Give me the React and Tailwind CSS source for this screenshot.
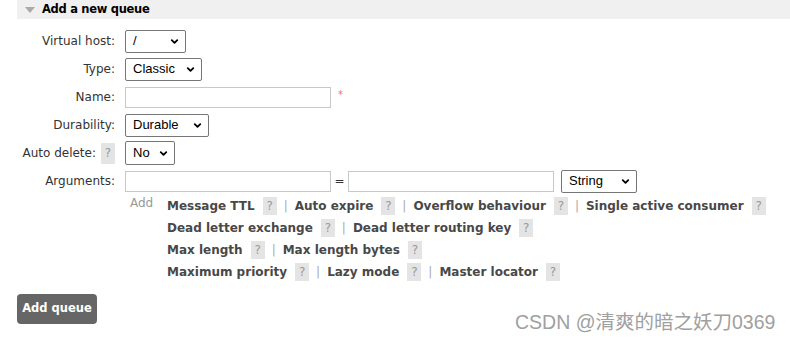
import { ChevronDown } from 'lucide-react'

const font = { fontFamily: '"DejaVu Sans", Verdana, sans-serif' }

function Select({ value, width, height = 'h-[23px]' }) {
  return (
    <div
      className={`${width} ${height} flex items-center justify-between border border-[#767676] rounded-[2px] bg-white pl-[7px] pr-[5px] text-[13px] text-black`}
      style={{ fontFamily: '"Liberation Sans", Arial, sans-serif' }}
    >
      <span>{value}</span>
      <ChevronDown className="w-[11px] h-[11px] text-black" strokeWidth={4} />
    </div>
  )
}

function Help({ className = 'h-[18px]' }) {
  return (
    <span className={`inline-flex items-center justify-center w-[14px] ${className} bg-[#e4e4e4] text-[#999] text-[12px] font-normal`}>
      ?
    </span>
  )
}

function Sep() {
  return <span className="mx-[7px] text-[#aaa] font-normal">|</span>
}

function Arg({ name }) {
  return (
    <>
      <span>{name}</span>
      <span className="ml-[8px]"><Help /></span>
    </>
  )
}

function Row({ label, children }) {
  return (
    <div className="flex items-center h-[28px]">
      <div className="w-[98px] flex items-center justify-end text-[12px] text-[#333]">{label}</div>
      <div className="ml-[10px] flex items-center">{children}</div>
    </div>
  )
}

const argRows = [
  ['Message TTL', 'Auto expire', 'Overflow behaviour', 'Single active consumer'],
  ['Dead letter exchange', 'Dead letter routing key'],
  ['Max length', 'Max length bytes'],
  ['Maximum priority', 'Lazy mode', 'Master locator'],
]

export default function App() {
  return (
    <div className="relative w-[790px] h-[342px] bg-white overflow-hidden" style={font}>
      {/* Section header */}
      <div className="ml-[17px] h-[19px] bg-[#f0f0f0] flex items-center">
        <svg className="ml-[8px] mr-[7px]" width="10" height="6" viewBox="0 0 10 6">
          <polygon points="0,0 10,0 5,6" fill="#aaa" />
        </svg>
        <span className="text-[11.5px] font-bold text-black tracking-[-0.3px]">Add a new queue</span>
      </div>

      {/* Form */}
      <div className="mt-[8px] ml-[17px]">
        <Row label="Virtual host:">
          <Select value="/" width="w-[61px]" />
        </Row>
        <Row label="Type:">
          <Select value="Classic" width="w-[77px]" />
        </Row>
        <Row label="Name:">
          <div className="w-[206px] h-[21px] border border-[#c8c8c8] bg-white" />
          <span className="ml-[7px] -mt-[6px] text-[10px] text-[#f07070]">*</span>
        </Row>
        <Row label="Durability:">
          <Select value="Durable" width="w-[84px]" />
        </Row>
        <Row
          label={
            <>
              <span>Auto delete:</span>
              <span className="ml-[5px] flex"><Help className="h-[21px]" /></span>
            </>
          }
        >
          <Select value="No" width="w-[50px]" height="h-[24px]" />
        </Row>
        <Row label="Arguments:">
          <div className="w-[206px] h-[21px] border border-[#c8c8c8] bg-white" />
          <span className="w-[17px] text-center text-[12px] text-[#333]">=</span>
          <div className="w-[206px] h-[21px] border border-[#c8c8c8] bg-white" />
          <div className="ml-[7px]">
            <Select value="String" width="w-[76px]" />
          </div>
        </Row>

        {/* Argument shortcuts */}
        <div className="flex ml-[113px]">
          <span className="w-[37px] text-[12px] text-[#999] -mt-[1px]">Add</span>
          <div className="flex flex-col">
            {argRows.map((row, i) => (
              <div key={i} className="flex items-center h-[22px] text-[12px] font-bold text-[#484848]">
                {row.map((name, j) => (
                  <span key={name} className="flex items-center">
                    {j > 0 && <Sep />}
                    <Arg name={name} />
                  </span>
                ))}
              </div>
            ))}
          </div>
        </div>

        <button className="mt-[11px] w-[80px] h-[30px] rounded-[4px] bg-[#666] text-white text-[11.5px] font-bold">
          Add queue
        </button>
      </div>

      <div
        className="absolute left-[515px] top-[313px] text-[19.5px] text-[#a0a0a0] leading-none whitespace-nowrap"
        style={{ fontFamily: '"Liberation Sans", "Noto Sans CJK SC", sans-serif', textShadow: '0 0 1px #fff' }}
      >
        CSDN @清爽的暗之妖刀0369
      </div>
    </div>
  )
}
